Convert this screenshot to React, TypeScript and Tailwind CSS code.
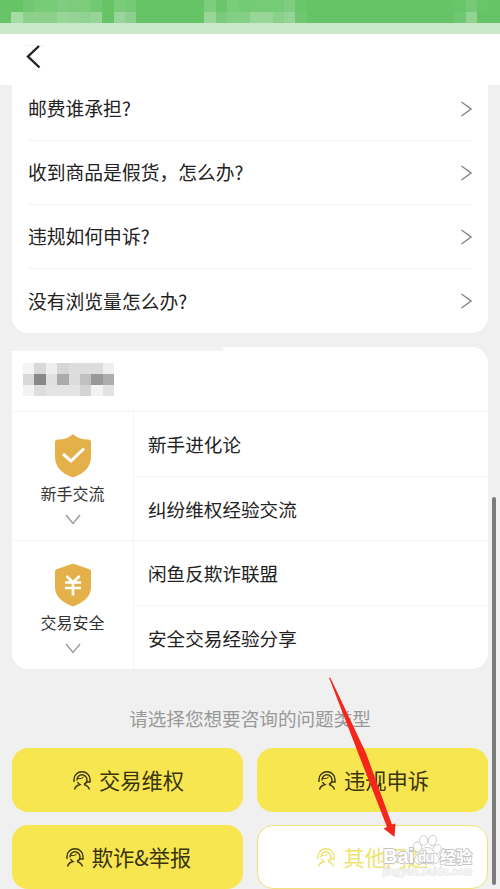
const statusTop = [
    "#66c467", "#66c467", "#70c971", "#78cc78", "#78cc78", "#7fcd80", "#7ccc7c", "#7ccc7c", "#72c973", "#66c467", "#7acc7b",
    "#74ca75", "#66c467", "#66c467", "#66c467", "#66c467", "#66c467", "#66c467", "#7dcd7e", "#68c569", "#7acd7b", "#74cb75",
    "#76cb77", "#76cb77", "#76cb77", "#7fcd80", "#6ac66b", "#66c467", "#66c467", "#66c467", "#66c467", "#66c467", "#66c467",
    "#66c467", "#66c467", "#66c467", "#66c467", "#66c467", "#66c467", "#66c467", "#69c56a", "#76ca77", "#69c56a", "#66c467",
];

const statusBottom = [
    "#68c469", "#a5dba5", "#8cd08c", "#8cd08c", "#8cd08c", "#98d698", "#94d395", "#90d291", "#97d597", "#66c467", "#97d598",
    "#8cd08d", "#66c467", "#66c467", "#66c467", "#66c467", "#66c467", "#66c467", "#98d698", "#7ccb7d", "#84ce85", "#84ce85",
    "#98d598", "#98d598", "#8ad08b", "#95d496", "#70c671", "#66c467", "#66c467", "#66c467", "#66c467", "#66c467", "#66c467",
    "#66c467", "#66c467", "#66c467", "#66c467", "#66c467", "#66c467", "#66c467", "#70c771", "#92d393", "#66c467", "#66c467",
];

const titleBlocks = [
    ["#f4f4f4", "#d8d8d8", "#eeeeee", "#d6d6d6", "#dddddd", "#dddddd", "#dddddd", "#f0f0f0"],
    ["#d8d8d8", "#888888", "#e0e0e0", "#ababab", "#dcdcdc", "#c0c0c0", "#999999", "#adadad"],
    ["#f3f3f3", "#dedede", "#e4e4e4", "#e4e4e4", "#e4e4e4", "#d4d4d4", "#f2f2f2", "#e2e2e2"],
];

const questions = [
    "邮费谁承担?",
    "收到商品是假货，怎么办?",
    "违规如何申诉?",
    "没有浏览量怎么办?",
];

const Blocks = ({ colors }: { colors: string[] }) => (
    <div className="flex flex-1">
        {colors.map((color, i) => (
            <div key={i} className="flex-1" style={{ backgroundColor: color }} />
        ))}
    </div>
);

const CheckShield = () => (
    <svg width="38" height="44" viewBox="0 0 38 44">
        <path
            d="M19 .5C20.5.5 21.500 2.500 25 4C28.500 5.300 32 5.400 34.500 5.500Q37 5.700 37 8V23C37 32 31 39 20.500 43Q19 43.600 17.500 43C7 39 1 32 1 23V8Q1 5.700 3.500 5.500C6 5.400 9.500 5.300 13 4C16.500 2.500 17.500.5 19 .5Z"
            fill="#e3b049"
        />
        <path d="M9 20L17 27L30 14.500" fill="none" stroke="white" strokeWidth="3" />
    </svg>
);

const YuanShield = () => (
    <svg width="38" height="44" viewBox="0 0 38 44">
        <path
            d="M17.700 1Q19 .4 20.300 1L35.500 6.200Q37 6.800 37 8.500V24C37 33 30.500 39 20.300 43Q19 43.500 17.700 43C7.500 39 1 33 1 24V8.500Q1 6.800 2.500 6.200Z"
            fill="#e3b049"
        />
        <path
            d="M12.500 13L19 19.500L25.500 13M11 19.500H27M11 25H27M19 19V32.500"
            fill="none"
            stroke="white"
            strokeWidth="2.700"
        />
    </svg>
);

const AgentIcon = () => (
    <svg width="18" height="19" viewBox="0 0 18 19" fill="none" stroke="currentColor" strokeWidth="1.400">
        <path d="M1 11V8.500A8 7.700 0 0 1 17 8.500V11H13" />
        <path d="M4 9.500V9A5 5.300 0 0 1 14 9C14 11 13 12.500 11 13.500" />
        <path d="M5 7.500C8 8 10 7 11 5.500" strokeWidth="1" />
        <path d="M1.500 18.500C2.300 15.500 4 14.300 7 13.500C5.800 12.800 5 12 4.500 11M11 13.500C14 14.500 15.800 16 16.500 18.500" />
    </svg>
);

const topics = [
    { name: "新手交流", icon: <CheckShield />, items: ["新手进化论", "纠纷维权经验交流"] },
    { name: "交易安全", icon: <YuanShield />, items: ["闲鱼反欺诈联盟", "安全交易经验分享"] },
];

const actions = ["交易维权", "违规申诉", "欺诈&举报", "其他问题"];

const Watermark = () => (
    <svg className="absolute left-[380px] top-[830px]" width="100" height="55" viewBox="0 0 100 55">
        <g fill="white" fillOpacity=".85" stroke="#cfcfcf" strokeWidth="1">
            <ellipse cx="37.500" cy="17" rx="4" ry="5" transform="rotate(-20 37.500 17)" />
            <ellipse cx="43.500" cy="10.500" rx="4" ry="5" />
            <ellipse cx="52.500" cy="10.500" rx="4" ry="5" transform="rotate(10 52.500 10.500)" />
            <ellipse cx="57" cy="19" rx="4" ry="4.500" transform="rotate(25 57 19)" />
            <path d="M46 17.500C51 17 52 20 55 23C61 28 60 34 53 34C48 33 44 33 40 34C33 34 33 28 38 24C41 21 42 18 46 17.500Z" />
        </g>
        <g fill="white" stroke="#c5c5c5" strokeWidth="1.800" paintOrder="stroke" fontFamily="Liberation Sans, sans-serif" fontWeight="700">
            <text x="3" y="33" fontSize="20" textLength="31">Bai</text>
            <text x="38" y="32" fontSize="14" textLength="16">du</text>
            <text x="60" y="32.500" fontSize="16" fontFamily="Noto Sans CJK SC, sans-serif">经验</text>
        </g>
        <text
            x="3"
            y="45"
            fontSize="10"
            textLength="89"
            fontFamily="Liberation Sans, sans-serif"
            fill="white"
            stroke="#dcdcdc"
            strokeWidth="1"
            paintOrder="stroke"
        >
            jingyan.baidu.com
        </text>
    </svg>
);

const App = () => {
    return (
        <div className="relative w-[500px] h-[889px] overflow-hidden bg-[#f0f0f0] font-['Noto_Sans_CJK_SC',sans-serif] text-[#222]">
            <div className="flex flex-col h-[23px]">
                <Blocks colors={statusTop} />
                <Blocks colors={statusBottom} />
            </div>
            <div className="h-[11px] bg-[#c8e8c9]" />

            <header className="h-[51px] bg-white pl-[25px] pt-[11px]">
                <svg width="20" height="24" viewBox="0 0 20 24" fill="none">
                    <path d="M-3 .3H20" stroke="#e5e5e5" strokeWidth=".7" />
                    <path d="M14 1L3 11.500L14.500 22.500" stroke="#222" strokeWidth="2.400" />
                </svg>
            </header>

            <main className="px-3">
                <section className="h-[248px] rounded-b-2xl bg-white overflow-hidden px-4">
                    <div className="-mt-2 divide-y divide-[#f3f3f3]">
                        {questions.map((question) => (
                            <div key={question} className="h-16 flex items-center justify-between">
                                <span className="text-[18.8px]">{question}</span>
                                <svg width="11" height="16" viewBox="0 0 11 16" fill="none">
                                    <path d="M.5 1L10 8L.5 15" stroke="#888" strokeWidth="1.500" />
                                </svg>
                            </div>
                        ))}
                    </div>
                </section>

                <section className="relative mt-[14px] h-[322px] rounded-tr-2xl rounded-b-2xl bg-white overflow-hidden">
                    <div className="absolute left-0 top-0 w-[212px] h-1 bg-[#f3f3f3] rounded-tr-full" />
                    <div className="h-[65px] pl-[11px] pt-4 border-b border-[#f5f5f5]">
                        <div className="flex flex-col w-[91px] h-[33px]">
                            {titleBlocks.map((row, i) => (
                                <Blocks key={i} colors={row} />
                            ))}
                        </div>
                    </div>
                    <div className="divide-y divide-[#f5f5f5]">
                        {topics.map((topic) => (
                            <div key={topic.name} className="flex h-[129px]">
                                <div className="w-[122px] flex flex-col items-center pt-[22px] border-r border-[#f5f5f5]">
                                    {topic.icon}
                                    <span className="mt-[3px] text-base leading-6 text-[#333]">{topic.name}</span>
                                    <svg className="mt-[9px]" width="16" height="12" viewBox="0 0 16 12" fill="none">
                                        <path d="M1 1L8 9.500L15 1" stroke="#999" strokeWidth="1.400" />
                                    </svg>
                                </div>
                                <div className="flex-1 divide-y divide-[#f5f5f5]">
                                    {topic.items.map((item) => (
                                        <div key={item} className="h-[64.5px] flex items-center pl-[14px] text-[18.6px]">
                                            {item}
                                        </div>
                                    ))}
                                </div>
                            </div>
                        ))}
                    </div>
                </section>

                <p className="mt-[35px] h-7 text-center leading-7 text-[18.6px] text-[#999]">
                    请选择您想要咨询的问题类型
                </p>

                <div className="mt-4 grid grid-cols-2 gap-x-[14px] gap-y-[13px]">
                    {actions.map((action, i) => (
                        <button
                            key={action}
                            className={
                                i === 3
                                    ? "h-16 rounded-2xl flex items-center justify-center gap-2 pl-px text-[21.3px] bg-white border-[1.5px] border-[#ede17c] text-[#efe36e]"
                                    : "h-16 rounded-2xl flex items-center justify-center gap-2 pl-0.5 text-[21.3px] bg-[#f8e651] text-[#39340f]"
                            }
                        >
                            <AgentIcon />
                            {action}
                        </button>
                    ))}
                </div>
            </main>

            <div className="absolute left-[492px] top-[497px] w-1 h-[388px] rounded-full bg-[#7b7b7b]" />
            <Watermark />
            <svg className="absolute left-[320px] top-[670px]" width="90" height="175" viewBox="0 0 90 175">
                <path d="M9 7.500L10.500 8L46 83L72 154.500L75.500 153.500L74.500 167L63.500 158.500L67 157L38.500 84Z" fill="#f5261a" />
            </svg>
        </div>
    );
};

export default App;
